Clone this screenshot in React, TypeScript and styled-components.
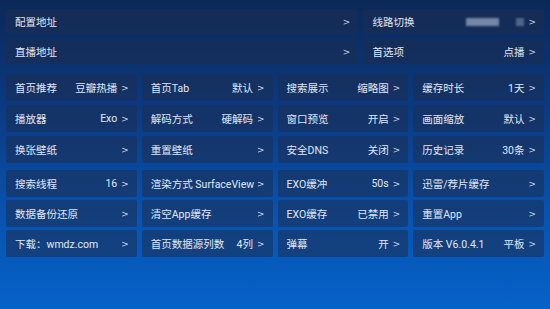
import React from "react";
import styled, { createGlobalStyle } from "styled-components";

const GlobalStyle = createGlobalStyle`
    html, body {
        margin: 0;
        padding: 0;
        width: 550px;
        height: 309px;
        overflow: hidden;
    }
    #root {
        width: 550px;
        height: 309px;
    }
`;

type Item = { label: string; value?: string };

const groupOne: Item[] = [
    { label: "首页推荐", value: "豆瓣热播" },
    { label: "首页Tab", value: "默认" },
    { label: "搜索展示", value: "缩略图" },
    { label: "缓存时长", value: "1天" },
    { label: "播放器", value: "Exo" },
    { label: "解码方式", value: "硬解码" },
    { label: "窗口预览", value: "开启" },
    { label: "画面缩放", value: "默认" },
    { label: "换张壁纸" },
    { label: "重置壁纸" },
    { label: "安全DNS", value: "关闭" },
    { label: "历史记录", value: "30条" },
];

const groupTwo: Item[] = [
    { label: "搜索线程", value: "16" },
    { label: "渲染方式 SurfaceView" },
    { label: "EXO缓冲", value: "50s" },
    { label: "迅雷/荐片缓存" },
    { label: "数据备份还原" },
    { label: "清空App缓存" },
    { label: "EXO缓存", value: "已禁用" },
    { label: "重置App" },
    { label: "下载：wmdz.com" },
    { label: "首页数据源列数", value: "4列" },
    { label: "弹幕", value: "开" },
    { label: "版本 V6.0.4.1", value: "平板" },
];

const Row = ({ item }: { item: Item }) => (
    <Card>
        <Label>{item.label}</Label>
        <Right>
            {item.value && <Value>{item.value}</Value>}
            <Arrow>&gt;</Arrow>
        </Right>
    </Card>
);

const App = () => {
    return (
        <Screen>
            <GlobalStyle />

            {/* -----TOP ROWS----- */}
            <TopRow>
                <Card $grow={2.05} $height={25}>
                    <Label>配置地址</Label>
                    <Arrow>&gt;</Arrow>
                </Card>
                <Card $grow={1} $height={25}>
                    <Label>线路切换</Label>
                    <Right>
                        <Blurred>
                            <span className="a" />
                            <span className="b" />
                        </Blurred>
                        <Arrow>&gt;</Arrow>
                    </Right>
                </Card>
            </TopRow>
            <TopRow>
                <Card $grow={2.05} $height={25}>
                    <Label>直播地址</Label>
                    <Arrow>&gt;</Arrow>
                </Card>
                <Card $grow={1} $height={25}>
                    <Label>首选项</Label>
                    <Right>
                        <Value>点播</Value>
                        <Arrow>&gt;</Arrow>
                    </Right>
                </Card>
            </TopRow>

            {/* -----SETTINGS GRID----- */}
            <Grid $gap={4} $top={5}>
                {groupOne.map((item) => (
                    <Row key={item.label} item={item} />
                ))}
            </Grid>
            <Grid $gap={3} $top={2}>
                {groupTwo.map((item) => (
                    <Row key={item.label} item={item} />
                ))}
            </Grid>
        </Screen>
    );
};

//* ----- styled components -----
const Screen = styled.div`
    width: 550px;
    height: 309px;
    box-sizing: border-box;
    padding: 9px 6px 0;
    display: flex;
    flex-direction: column;
    gap: 5px;
    background: linear-gradient(180deg, #0b2858 0%, #0b3a82 35%, #0853b0 70%, #0562c8 100%);
    font-family: "Roboto", "Noto Sans CJK SC", sans-serif;
    color: #e2e8f3;
`;

const TopRow = styled.div`
    display: flex;
    gap: 5px;
`;

const Grid = styled.div<{ $gap: number; $top: number }>`
    display: grid;
    grid-template-columns: repeat(4, 1fr);
    column-gap: 5px;
    row-gap: ${(p) => p.$gap}px;
    margin-top: ${(p) => p.$top}px;
`;

const Card = styled.div<{ $grow?: number; $height?: number }>`
    flex: ${(p) => p.$grow ?? 1} 1 0;
    height: ${(p) => p.$height ?? 27}px;
    box-sizing: border-box;
    padding: 0 8px 0 9px;
    display: flex;
    align-items: center;
    justify-content: space-between;
    background: rgba(30, 45, 80, 0.55);
    border-radius: 2px;
    font-size: 10.5px;
    white-space: nowrap;
    min-width: 0;
`;

const Label = styled.span``;

const Right = styled.span`
    display: flex;
    align-items: center;
    gap: 4px;
`;

const Value = styled.span``;

const Arrow = styled.span`
    font-size: 9px;
    font-family: "DejaVu Sans", sans-serif;
    opacity: 0.9;
`;

const Blurred = styled.span`
    display: flex;
    align-items: center;
    gap: 17px;
    filter: blur(0.8px);
    span {
        display: block;
        height: 8px;
        background: rgba(150, 165, 195, 0.75);
    }
    .a {
        width: 33px;
    }
    .b {
        width: 8px;
        background: rgba(120, 140, 175, 0.6);
    }
`;

export default App;
